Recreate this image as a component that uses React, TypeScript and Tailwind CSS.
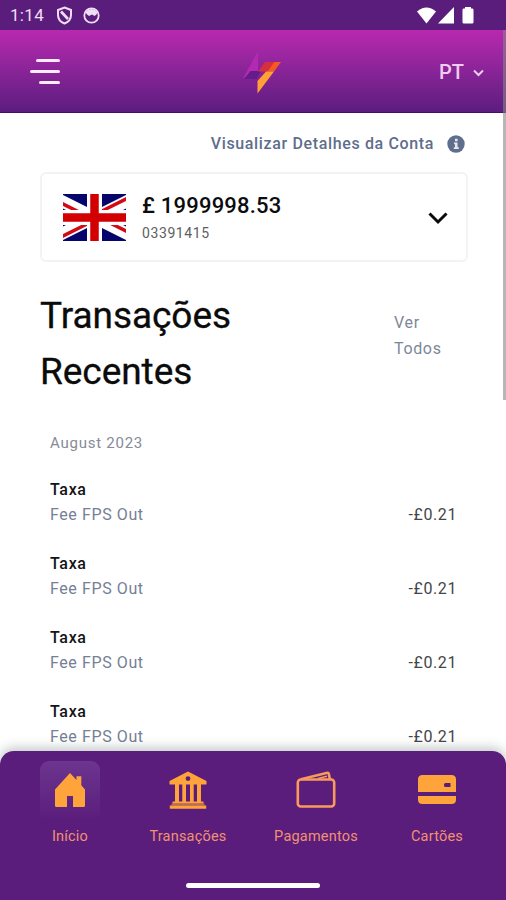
import { useState } from 'react';

interface Transaction {
  id: number;
  title: string;
  description: string;
  amount: string;
}

const transactions: Transaction[] = [
  { id: 1, title: 'Taxa', description: 'Fee FPS Out', amount: '-£0.21' },
  { id: 2, title: 'Taxa', description: 'Fee FPS Out', amount: '-£0.21' },
  { id: 3, title: 'Taxa', description: 'Fee FPS Out', amount: '-£0.21' },
  { id: 4, title: 'Taxa', description: 'Fee FPS Out', amount: '-£0.21' },
];

const HomeIcon = () => (
  <svg width="32" height="36" viewBox="0 0 32 36" fill="#ffa43b">
    <path d="M1 17.500 16 1l6.500 7V4.300h4.800v9L31 17.500v16a1.500 1.500 0 0 1-1.500 1.500H19V24h-6v11H2.500A1.500 1.500 0 0 1 1 33.500Z" />
  </svg>
);

const BankIcon = () => (
  <svg width="38" height="38" viewBox="0 0 38 38" fill="#ffa43b">
    <path fillRule="evenodd" d="M19 .5 37.500 10v3.500H.5V10ZM19 5.200a2.400 2.400 0 1 0 0 4.800 2.400 2.400 0 0 0 0-4.800Z" />
    <path d="M6 13h4v18H6ZM13.300 13h3.700v18h-3.700ZM21 13h3.700v18H21ZM28 13h4v18h-4ZM3.500 30.500h31v2h-31ZM.8 34.500h36.400v3.200H.8Z" />
    <path d="M2.500 32.500h33v2h-33Z" opacity=".6" />
  </svg>
);

const WalletIcon = () => (
  <svg width="40" height="38" viewBox="0 0 40 38" fill="none" stroke="#f79a5c" strokeWidth="2.600" strokeLinejoin="round">
    <rect x="1.800" y="8.500" width="36.400" height="27" rx="3" />
    <path d="M5 8.300 30.500 1.900q2-.5 2.400 1.300l1 5" />
    <path d="m22 7.500 9-2.200" strokeWidth="1.600" />
  </svg>
);

const CardIcon = () => (
  <svg width="38" height="30" viewBox="0 0 38 30" fill="#ffa43b">
    <path fillRule="evenodd" d="M4.500 0h29Q38 0 38 4.500V17H0V4.500Q0 0 4.500 0ZM27.500 8A1.500 1.500 0 0 0 26 9.500v1a1.500 1.500 0 0 0 1.500 1.500h5V8Z" />
    <path d="M0 21h38v3.500q0 4.500-4.500 4.500h-29Q0 29 0 24.500Z" />
  </svg>
);

const navItems = [
  { label: 'Início', icon: <HomeIcon />, width: 'w-[80px]' },
  { label: 'Transações', icon: <BankIcon />, width: 'w-[100px]' },
  { label: 'Pagamentos', icon: <WalletIcon />, width: 'w-[100px]' },
  { label: 'Cartões', icon: <CardIcon />, width: 'w-[80px]' },
];

const StatusBar = () => (
  <div className="flex h-[30px] shrink-0 items-center bg-[#5b1d7c] pl-[10px] pr-[32px] text-[#efdff6]">
    <span className="mt-[1px] w-[35px] text-[17px] leading-none tracking-[0.3px]">1:14</span>
    <svg className="ml-[11px]" width="17" height="19" viewBox="0 0 17 19" fill="none" stroke="currentColor">
      <path d="M8.500 1.500 15 4v5c0 4-2.600 7-6.500 8.500C4.600 16 2 13 2 9V4Z" strokeWidth="2" />
      <path d="m5 5.500 7 7.500" strokeWidth="2.600" />
    </svg>
    <svg className="ml-[10px]" width="17" height="17" viewBox="0 0 17 17">
      <circle cx="8.500" cy="8.500" r="7.200" fill="none" stroke="currentColor" strokeWidth="1.800" />
      <path d="M2.500 5Q8.500-1 14.500 5l-1 2.500-2 1.500L9 7.500 6 9 3.500 7Z" fill="currentColor" />
    </svg>
    <div className="ml-auto flex items-center gap-[2px] text-white">
      <svg width="19" height="17" viewBox="0 0 19 17" fill="currentColor">
        <path d="M0 4.500Q9.500-3.500 19 4.500L9.500 16.500Z" />
      </svg>
      <svg width="16" height="17" viewBox="0 0 16 17" fill="currentColor">
        <path d="M16 0v16.500H0Z" />
      </svg>
      <svg className="ml-[6px]" width="12" height="17" viewBox="0 0 12 17" fill="currentColor">
        <path d="M3 0h6v1.600h1.200q1.300 0 1.300 1.300v12.300q0 1.300-1.300 1.300H1.800Q.5 16.500.5 15.200V2.900q0-1.300 1.300-1.300H3Z" />
      </svg>
    </div>
  </div>
);

const Header = () => (
  <header className="grid h-[83px] shrink-0 grid-cols-3 items-center border-b border-[#4a0b69] bg-gradient-to-b from-[#b928b0] to-[#5c1c7f] pl-[30px] pr-[22px]">
    <button aria-label="Menu" className="mt-[1px] flex w-[30px] flex-col items-end gap-[8px]">
      <span className="h-[3px] w-[24px] rounded-full bg-[#faeafa]" />
      <span className="h-[3px] w-[30px] rounded-full bg-[#faeafa]" />
      <span className="h-[3px] w-[21px] rounded-full bg-[#faeafa]" />
    </button>
    <svg className="ml-[6px] mt-[2px] justify-self-center" width="42" height="44" viewBox="0 0 42 44">
      <path d="M19 1v20.500L4 28.500Z" fill="#b22ab2" />
      <path d="M11.500 21H22l-4.500 8H5Z" fill="#651c8b" />
      <path d="M26 12h11l-7 9.500H19Z" fill="#d6303f" />
      <path d="M35.500 12H42l-7 9.500h-6.500Z" fill="#f75a20" />
      <path d="M27 21.500h8L18.500 43.500V31Z" fill="#ffa135" />
    </svg>
    <button className="mt-[2px] flex items-center justify-end gap-[9px] text-[20px] text-[#f0cdf0]">
      <span className="font-medium leading-none">PT</span>
      <svg className="mt-[2px]" width="11" height="8" viewBox="0 0 11 8" fill="none" stroke="currentColor" strokeWidth="2">
        <path d="m1 1.500 4.500 4.500L10 1.500" />
      </svg>
    </button>
  </header>
);

const UkFlag = () => (
  <svg width="63" height="47" viewBox="0 0 63 47">
    <path d="M0 0h63v47H0Z" fill="#05056b" />
    <path d="M-4 5.750 67 41.250M67 5.750-4 41.250" stroke="#fff" strokeWidth="12" />
    <path d="M-2 9 20 20M65 4 39 17M-2 43 24 30M65 38 43 27" stroke="#d30a14" strokeWidth="3.400" />
    <path d="M31.500 0v47M0 23.500h63" stroke="#fff" strokeWidth="15" />
    <path d="M31.500 0v47M0 23.500h63" stroke="#d20000" strokeWidth="8.500" />
  </svg>
);

const AccountCard = () => (
  <button className="mt-[18px] flex h-[90px] w-[428px] items-center rounded-[6px] border-2 border-[#f3f3f5] bg-white pl-[21px] pr-[18px] text-left">
    <UkFlag />
    <div className="ml-[16px] pt-[4px]">
      <p className="text-[22px] font-medium leading-[28px] tracking-[0.2px] text-[#0c0c0f]">£ 1999998.53</p>
      <p className="text-[14px] leading-[26px] tracking-[0.6px] text-[#5e5e62]">03391415</p>
    </div>
    <svg className="ml-auto mt-[2px]" width="20" height="13" viewBox="0 0 20 13" fill="none" stroke="#0b0b0b" strokeWidth="3">
      <path d="m1.500 1.500 8.500 8.500 8.500-8.500" />
    </svg>
  </button>
);

export default function App() {
  const [active, setActive] = useState('Início');

  return (
    <div className="flex h-[900px] w-[506px] flex-col overflow-hidden bg-white font-['Roboto',sans-serif]">
      <StatusBar />
      <div className="relative flex h-[733px] shrink-0 flex-col overflow-hidden">
        <Header />
        <main className="px-[40px] pt-[21px]">
          <div className="flex h-[20px] w-[425px] items-center justify-end gap-[13px] text-[#5f6e8c]">
            <span className="whitespace-nowrap text-[16px] font-medium leading-[20px] tracking-[0.64px]">Visualizar Detalhes da Conta</span>
            <svg width="18" height="18" viewBox="0 0 18 18">
              <circle cx="9" cy="9" r="8.700" fill="#5f6e8c" />
              <path d="M8 3.800h2.600v2.400H8ZM7 7.500h3.500v4.800h1.300V14H6.800v-1.700H8V9.200H7Z" fill="#e5e8ee" />
            </svg>
          </div>
          <AccountCard />

          <div className="mt-[26px] flex items-center justify-between pr-[20px]">
            <h1 className="w-[240px] text-[37px] leading-[56px] tracking-[-0.05px] text-[#0b0b0b] [-webkit-text-stroke:0.3px_#0b0b0b]">Transações Recentes</h1>
            <a href="#" className="mt-[-17px] w-[52px] text-[16px] leading-[26px] tracking-[0.65px] text-[#7c8799]">Ver Todos</a>
          </div>

          <p className="mt-[33px] pl-[10px] text-[15px] leading-[20px] tracking-[0.75px] text-[#868b98]">August 2023</p>

          <ul className="mt-[24px] flex flex-col gap-[24px] pl-[10px] pr-[9px]">
            {transactions.map(({ id, title, description, amount }) => (
              <li key={id} className="flex h-[50px] items-end justify-between">
                <div>
                  <p className="text-[16px] font-medium leading-[25px] tracking-[0.65px] text-[#141416]">{title}</p>
                  <p className="text-[16px] leading-[25px] tracking-[0.6px] text-[#758095]">{description}</p>
                </div>
                <span className="text-[16px] leading-[25px] tracking-[0.6px] text-[#444549]">{amount}</span>
              </li>
            ))}
          </ul>
        </main>
        <div className="absolute right-0 top-0 h-[370px] w-[3px] bg-[#858585]/60" />
      </div>

      <nav className="relative -mt-[12px] flex h-[149px] shrink-0 flex-col rounded-t-[14px] bg-[#5b1d7c] shadow-[0_-3px_12px_rgba(60,75,75,0.32)]">
        <div className="flex justify-between pl-[30px] pr-[29px] pt-[10px]">
          {navItems.map(({ label, icon, width }, i) => (
            <button
              key={label}
              onClick={() => setActive(label)}
              className={`flex flex-col items-center ${width} ${i === 1 || i === 2 ? '-ml-[3px]' : ''}`}
            >
              <span
                className={`flex h-[59px] w-[60px] items-center justify-center rounded-[9px] pb-[2px] ${
                  active === label ? 'bg-gradient-to-b from-[#6c358f] to-[#5b1d7c]' : ''
                }`}
              >
                {icon}
              </span>
              <span className="mt-[7px] text-[14.500px] leading-[20px] tracking-[0.2px] text-[#f09272]">{label}</span>
            </button>
          ))}
        </div>
        <div className="mx-auto mb-[12px] mt-auto h-[5px] w-[134px] rounded-full bg-white" />
      </nav>
    </div>
  );
}
